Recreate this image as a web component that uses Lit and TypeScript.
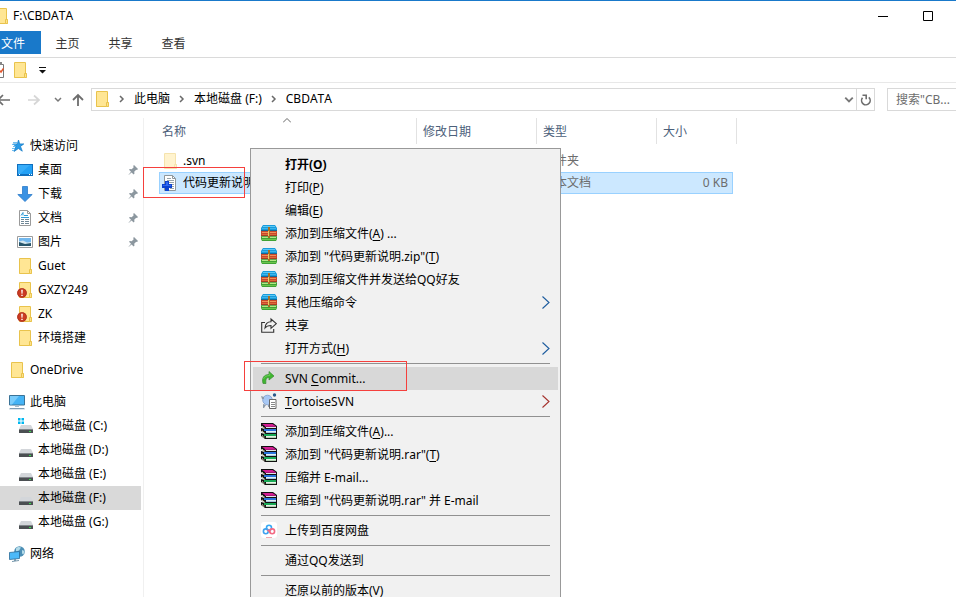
import { LitElement, html, css, svg, nothing } from "lit";
import type { TemplateResult } from "lit";
import { customElement } from "lit/decorators.js";
import { classMap } from "lit/directives/class-map.js";

const icon = (name: string, box = "0 0 16 16", w = 16, h = 16) => html`
  <svg class="icon" width=${w} height=${h} viewBox=${box} aria-hidden="true">${shapes[name]}</svg>`;

const folder = svg`
  <path d="M2 1h11v11h1v4H2z" fill="#ffe694"/>
  <path d="M2.500 .5h11v11h.9v4H2.500z" fill="none" stroke="#e9c34c"/>
  <path d="M12.500 15v-3.500h1.900v4h-1.900" fill="#ffe694" stroke="#e9c34c"/>`;

const drive = svg`
  <path d="M4 7h10l2 4H2z" fill="#d3d6da"/>
  <path d="M2 11h14v4H2z" fill="#4b4f52"/>
  <path d="M2 11h14v1H2z" fill="#80868a"/>
  <path d="M12 13h2v1h-2z" fill="#35e04b"/>`;

const shapes: Record<string, TemplateResult> = {
  folder,
  faded: svg`<g opacity=".45">${folder}</g>`,
  badFolder: svg`${folder}
    <circle cx="5" cy="11" r="4.800" fill="#cc3b22"/>
    <circle cx="5" cy="11" r="4.300" fill="none" stroke="#a8341f" stroke-width=".8"/>
    <path d="M4.200 7.800h1.600l-.3 4h-1zM4.300 12.700h1.400v1.400H4.300z" fill="#fff"/>`,
  star: svg`
    <path d="M9.500 2l1.200 3.900h4.100l-3.300 2.500 1.800 4.800-3.900-2.700-4.300 3 1.700-4.900L4.200 5.900h4.100z" fill="#2b9be6" stroke="#1178c4" stroke-width=".7"/>
    <path d="M4 4.500h4M3 6.500h4M4 8.500h3M3 10.500h3M3 12.500h2" stroke="#4aaeee" stroke-width=".8"/>`,
  desktop: svg`
    <path d="M0 2h16v12H0z" fill="#0f6fbe"/><path d="M1 3h14v9H1z" fill="#22a0f5"/>
    <path d="M1 3h12L3 12H1z" fill="#38adf9"/><path d="M2 12.500h1m9 0h1m1 0h1" stroke="#fff"/>`,
  down: svg`<path d="M5.500 .5h5v8h4.700L8 15.500.8 8.500h4.700z" fill="#3a92e3" stroke="#2b7bca" stroke-width=".8"/>`,
  doc: svg`
    <path d="M2.500 .5h8l3 3v12h-11z" fill="#fff" stroke="#9a9a9a"/><path d="M10.500 .5v3h3" fill="none" stroke="#9a9a9a"/>
    <path d="M4 5.500l2-3v3M7 5.500h4M4 7.500h8" stroke="#2f9bd8" fill="none"/>
    <path d="M4 9.500h3m1 0h4M4 11.500h3m1 0h4M4 13.500h3m1 0h4" stroke="#6f8796"/>`,
  picture: svg`
    <path d="M.5 2.500h15v11H.5z" fill="#fff" stroke="#9c9c9c"/><path d="M2 4h12v8H2z" fill="#72b8ee"/>
    <path d="M2 7.500l4-1 4 2 4-.5v4H2z" fill="#d5e6ee"/><path d="M2 8l3 1 3 1 6-1v3H2z" fill="#28566b"/>`,
  pc: svg`
    <path d="M.5 1.500h15v9.500H.5z" fill="#45b3f5" stroke="#3b7397"/><path d="M1 2h9L3 10.500H1z" fill="#7accfb"/>
    <path d="M6 11.500h4v1.500H6z" fill="#a8bccb"/><path d="M1 14h14l1 1.300H0z" fill="#7f9db5"/>`,
  drive,
  winDrive: svg`${drive}<path d="M1 0h2.500v2.500H1zM4.500 0H7v2.500H4.500zM1 3.500h2.500V6H1zM4.500 3.500H7V6H4.500z" fill="#00b7f0"/>`,
  network: svg`
    <circle cx="10.500" cy="5.500" r="5.300" fill="#4c8fb5"/>
    <path d="M7 2.500c2-2.500 4-1.500 5-1l-2 3-3 1zM13 4l2.500 1-1 3.500-1.500-1z" fill="#b3dbe9"/>
    <path d="M.5 6.500l10-1v7l-10 1z" fill="#4cb9f8" stroke="#2a6b98" stroke-width=".8"/>
    <path d="M3 15l7-1v1l-7 1z" fill="#7899ad"/><path d="M5 13h2v2H5z" fill="#7899ad"/>`,
  pin: svg`<path d="M6 0l4 4-1 1-.8-.2-2 2 .3 1.800-.9.900-2-2L0 10.500l3-3.700-2-2 .9-.9 1.800.3 2-2L5.200 1z" fill="#8c979f"/>`,
  textDoc: svg`
    <path d="M2.500 .5h8l3 3v12h-11z" fill="#fff" stroke="#8f979b"/><path d="M10.500 .5v3h3" fill="none" stroke="#8f979b"/>
    <path d="M5 3.500h4M5 5.500h7M5 7.500h7M8 9.500h4M9 11.500h3M8 13.500h4" stroke="#97a4ab"/>
    <path d="M3 6h4v3h3v4H7v3H3v-3H0V9h3z" fill="#0d43cf"/><path d="M4 7h2v3h3v1H1v-1h3z" fill="#2f69f0"/>`,
  zip: svg`
    <path d="M2 0h12l2 3v2H0V3z" fill="#189bdc"/><path d="M2 1h12v1H2z" fill="#5cc9f5"/><path d="M1 3h14v1H1z" fill="#3db5ea"/>
    <path d="M0 5h16v1H0z" fill="#146a96"/>
    <path d="M0 6h16v5H0z" fill="#c9472a"/><path d="M1 7h14v1H1z" fill="#ee9157"/><path d="M1 9h14v1H1z" fill="#dc6a3a"/>
    <path d="M0 10.500h16v.8H0z" fill="#8a3519"/>
    <path d="M0 11.300h16V14l-1 2H1l-1-2z" fill="#3fa235"/><path d="M1 12h14v1H1z" fill="#b4e684"/><path d="M1 14h14v1H1z" fill="#6cc64c"/>
    <path d="M7 2h2v11H7z" fill="#a87024"/><path d="M7 6h1v5H7z" fill="#f1cb66"/>`,
  share: svg`<path d="M4 5.500H.7v9.800h12V12M4 11c.3-4 2.500-6.200 6-6.200V2l5.300 4.700-5.300 4.600V8.500C7.500 8.500 5.500 9 4 11z" fill="none" stroke="#333" stroke-width="1.100"/>`,
  commit: svg`<path d="M2 13.500C.5 8 3 4.500 8 4.500V1.500L13 6 8 10V7.500C5 7.500 4.500 10 5 13.500z" fill="#3fb62f" stroke="#3a8a33" stroke-width=".7"/><path d="M2.500 9C3.500 6.500 5.500 5.500 8.700 5.500V3.500" fill="none" stroke="#73d465" stroke-width=".8"/>`,
  tortoise: svg`
    <circle cx="6.500" cy="7" r="4.800" fill="#a8c8f4" stroke="#7e9ccb" stroke-width=".8"/>
    <path d="M0 3l3 1v2L1 6zM2 11l3 1-2 3H2zM7 12h2v2H7z" fill="#8d9aa9"/><circle cx="13.500" cy="2" r="1.700" fill="#29598a"/>
    <path d="M8.500 6.500h6.500v9H8.500z" fill="#fff" stroke="#666"/><path d="M10 9.500h4M10 11.500h4M10 13.500h4" stroke="#888"/>`,
  rar: svg`
    <path d="M0 0h12l4 3v3H4L0 3z" fill="#111"/><path d="M1 1h10.500l3 2H4z" fill="#d31d92"/><path d="M4 3h11v1H4z" fill="#a81578"/><path d="M5 4h10v1H5z" fill="#e4e4e4"/>
    <path d="M0 5l4 1h12v5H4L0 8z" fill="#111"/><path d="M3 6h12v2H3z" fill="#2a74dc"/><path d="M5 8h10v2H5z" fill="#e3eef5"/><path d="M5 9h10v.5H5z" fill="#68a0c8"/>
    <path d="M0 10l4 1h12v5H4l-4-3z" fill="#111"/><path d="M3 11h12v2H3z" fill="#18a955"/><path d="M5 13h10v2H5z" fill="#e6efe6"/><path d="M5 14h10v.5H5z" fill="#80b580"/>
    <path d="M1 3.500l3 2M1 8l3 2.500M1 12.800l3 2" stroke="#f3f1c8" stroke-width="1.200" stroke-dasharray="1 .7"/>`,
  baidu: svg`
    <rect width="16" height="16" rx="3" fill="#fff"/>
    <g fill="none" stroke-width="1.600"><circle cx="8" cy="5.700" r="2.500" stroke="#34a8f5"/>
    <circle cx="4.800" cy="9.300" r="2.400" stroke="#3da2f0"/><circle cx="11.200" cy="9.300" r="2.400" stroke="#f36983"/>
    <path d="M6.500 7.700l3 3" stroke="#f36983"/></g><path d="M5 15h6v1H5z" fill="#f2a6ad"/>`,
  clip: svg`<path d="M0 2.500h11.500v13H0z" fill="#fff" stroke="#777"/><path d="M7 0h3v3H7z" fill="#888"/><path d="M7 8l2 2 2.500-3.500" fill="none" stroke="#e5562b" stroke-width="1.500"/>`,
  back: svg`<path d="M15 8H3M8 3L3 8l5 5" fill="none" stroke="#6d6d6d" stroke-width="1.700"/>`,
  forward: svg`<path d="M2 8h11M8 3.500L13 8l-5 4.500" fill="none" stroke="#d6d6d6" stroke-width="1.700"/>`,
  up: svg`<path d="M8 14V3M3 8l5-5 5 5" fill="none" stroke="#6d6d6d" stroke-width="1.800"/>`,
  chevDown: svg`<path d="M1 2l3 3 3-3" fill="none" stroke="#787878" stroke-width="1.500"/>`,
  chevRight: svg`<path d="M2 1l3 3-3 3" fill="none" stroke="#6a6a6a" stroke-width="1.500"/>`,
  chevUp: svg`<path d="M0 4.500l4-4 4 4" fill="none" stroke="#666"/>`,
  more: svg`<path d="M0 0h7v1H0zM0 3h7L3.500 6.500z" fill="#111"/>`,
  refresh: svg`<path d="M2.500 3.800A4.300 4.300 0 1 0 8.800 3.300M2.500 1.300H6.200V5.200" fill="none" stroke="#6d6d6d" stroke-width="1.600"/>`,
  submenu: svg`<path d="M.5 .5L7 6.500l-6.500 6" fill="none" stroke="#1d5c9e" stroke-width="1.100"/>`,
  submenuRed: svg`<path d="M.5 .5L7 6.500l-6.500 6" fill="none" stroke="#a5322d" stroke-width="1.100"/>`,
  minimize: svg`<path d="M0 5h10v1H0z" fill="#000"/>`,
  maximize: svg`<path d="M.5 .5h9v9h-9z" fill="none" stroke="#000"/>`,
};

interface NavItem { label: string; icon: string; top?: boolean; pinned?: boolean; current?: boolean }

const navGroups: NavItem[][] = [
  [
    { label: "快速访问", icon: "star", top: true },
    { label: "桌面", icon: "desktop", pinned: true },
    { label: "下载", icon: "down", pinned: true },
    { label: "文档", icon: "doc", pinned: true },
    { label: "图片", icon: "picture", pinned: true },
    { label: "Guet", icon: "folder" },
    { label: "GXZY249", icon: "badFolder" },
    { label: "ZK", icon: "badFolder" },
    { label: "环境搭建", icon: "folder" },
  ],
  [{ label: "OneDrive", icon: "folder", top: true }],
  [
    { label: "此电脑", icon: "pc", top: true },
    { label: "本地磁盘 (C:)", icon: "winDrive" },
    { label: "本地磁盘 (D:)", icon: "drive" },
    { label: "本地磁盘 (E:)", icon: "drive" },
    { label: "本地磁盘 (F:)", icon: "drive", current: true },
    { label: "本地磁盘 (G:)", icon: "drive" },
  ],
  [{ label: "网络", icon: "network", top: true }],
];

/* An underscore in a label precedes its access key. */
interface MenuItem { label: string; icon?: string; bold?: boolean; active?: boolean; sub?: string }

const menuGroups: MenuItem[][] = [
  [
    { label: "打开(_O)", bold: true },
    { label: "打印(_P)" },
    { label: "编辑(_E)" },
    { label: "添加到压缩文件(_A) ...", icon: "zip" },
    { label: '添加到 "代码更新说明.zip"(_T)', icon: "zip" },
    { label: "添加到压缩文件并发送给QQ好友", icon: "zip" },
    { label: "其他压缩命令", icon: "zip", sub: "submenu" },
    { label: "共享", icon: "share" },
    { label: "打开方式(_H)", sub: "submenu" },
  ],
  [
    { label: "SVN _Commit...", icon: "commit", active: true },
    { label: "_TortoiseSVN", icon: "tortoise", sub: "submenuRed" },
  ],
  [
    { label: "添加到压缩文件(_A)...", icon: "rar" },
    { label: '添加到 "代码更新说明.rar"(_T)', icon: "rar" },
    { label: "压缩并 E-mail...", icon: "rar" },
    { label: '压缩到 "代码更新说明.rar" 并 E-mail', icon: "rar" },
  ],
  [{ label: "上传到百度网盘", icon: "baidu" }],
  [{ label: "通过QQ发送到" }],
  [{ label: "还原以前的版本(_V)" }],
];

const base = css`
  * { box-sizing: border-box; }
  .icon { display: block; flex: none; }
  button, input {
    font: inherit; color: inherit; background: none; border: 0; padding: 0; margin: 0; text-align: left;
  }
`;

@customElement("context-menu")
class ContextMenu extends LitElement {
  static styles = [base, css`
    :host {
      display: block; width: 311px; padding: 4px 2px; background: #f1f1f1; border: 1px solid #999;
    }
    .item { display: flex; align-items: center; width: 100%; height: 23px; padding: 0 8px; white-space: nowrap; }
    .active { background: #d8d8d8; }
    .bold { font-weight: 700; }
    .slot { flex: none; width: 24px; padding-bottom: 1px; }
    .label { flex: 1; }
    .key { text-decoration: underline; text-underline-offset: 2px; }
    .line { height: 1px; margin: 3px 8px; border: 0; background: #919191; }
  `];

  private label(text: string) {
    const [before, after] = text.split("_");
    return after === undefined
      ? text
      : html`${before}<span class="key">${after[0]}</span>${after.slice(1)}`;
  }

  render() {
    return menuGroups.map((group, i) => html`
      ${i ? html`<hr class="line">` : nothing}
      ${group.map((m) => html`
        <button class=${classMap({ item: true, active: !!m.active, bold: !!m.bold })} role="menuitem">
          <span class="slot">${m.icon ? icon(m.icon) : nothing}</span>
          <span class="label">${this.label(m.label)}</span>
          ${m.sub ? icon(m.sub, "0 0 8 13", 8, 13) : nothing}
        </button>`)}`);
  }
}

@customElement("nav-pane")
class NavPane extends LitElement {
  static styles = [base, css`
    :host { display: flex; flex-direction: column; gap: 8px; padding: 16px 2px 0 0; border-right: 1px solid #f0f0f0; }
    .item { display: flex; align-items: center; gap: 5px; width: 100%; height: 24px; padding: 0 3px 0 17px; white-space: nowrap; }
    .top { padding-left: 9px; }
    .current { background: #d9d9d9; }
    .label { flex: 1; }
  `];

  render() {
    return navGroups.map((group) => html`
      <div>
        ${group.map((n) => html`
          <button class=${classMap({ item: true, top: !!n.top, current: !!n.current })}>
            ${icon(n.icon)}<span class="label">${n.label}</span>
            ${n.pinned ? icon("pin", "0 0 10 10", 10, 10) : nothing}
          </button>`)}
      </div>`);
  }
}

@customElement("app-root")
class AppRoot extends LitElement {
  static styles = [base, css`
    :host {
      display: flex; flex-direction: column; position: relative; height: 100vh; overflow: hidden;
      background: #fff; color: #000; border-top: 1px solid #1979ca; box-sizing: border-box;
      font: 12px/20px "Noto Sans", "Noto Sans CJK SC", sans-serif; font-kerning: none;
    }
    .title { display: flex; align-items: center; gap: 5px; height: 30px; flex: none; padding-right: 23px; }
    .name { flex: 1; }
    .win { flex: none; margin-left: 30px; }
    .tabs { display: flex; height: 27px; flex: none; border-bottom: 1px solid #dadada; color: #333; }
    .tab { height: 23px; width: 53px; padding-top: 2px; text-align: center; }
    .file { width: 41px; padding-right: 15px; background: #1979ca; color: #fff; }
    .quick { display: flex; align-items: center; gap: 8px; height: 25px; flex: none; border-bottom: 1px solid #e8e8e8; }
    .nav { display: flex; align-items: center; height: 33px; flex: none; }
    .arrows { display: flex; align-items: center; width: 91px; }
    .forward { margin-left: 15px; }
    .recent { margin: 0 8px 0 12px; }
    .address { display: flex; align-items: center; flex: 1; height: 23px; border: 1px solid #d9d9d9; }
    .crumbs { display: flex; align-items: center; flex: 1; gap: 8px; padding: 0 0 2px 2px; }
    .drop { padding: 0 2px; }
    .reload { display: flex; align-items: center; height: 21px; padding: 0 2px 0 3px; border-left: 1px solid #d9d9d9; }
    .search {
      width: 69px; height: 23px; margin-left: 12px; padding-left: 8px; border: 1px solid #d9d9d9; border-right: 0;
    }
    .search::placeholder { color: #6d6d6d; opacity: 1; }
    .body { display: flex; flex: 1; min-height: 0; padding-top: 2px; }
    .side { width: 144px; flex: none; }
    .files { flex: 1; min-width: 0; padding-left: 15px; }
    .table { width: 578px; table-layout: fixed; border-collapse: separate; border-spacing: 0; }
    .table tbody::before { content: ""; display: block; height: 6px; }
    th { height: 26px; padding: 2px 0 0 6px; font-weight: 400; text-align: left; color: #4c607a; border-right: 1px solid #e2e2e2; }
    .c-name { width: 258px; position: relative; padding-left: 3px; }
    .c-mid { width: 120px; }
    .c-size { width: 76px; border-right: 0; }
    .c-end { width: 4px; padding: 0; }
    .sort { position: absolute; left: 50%; top: 0; margin-left: -5px; }
    td { height: 22px; padding: 0 0 0 6px; color: #6d6d6d; white-space: nowrap; line-height: 20px; border: 1px solid transparent; border-width: 1px 0; }
    .cell { display: flex; align-items: center; gap: 5px; color: #000; }
    td:first-child { padding-left: 2px; border-left-width: 1px; }
    td:nth-child(4) { text-align: right; padding-right: 4px; border-right-width: 1px; }
    .selected td { background: #cce8ff; border-color: #99d1ff; }
    .selected td:last-child { background: none; border-color: transparent; }
    .menu { position: absolute; left: 250px; top: 147px; }
    .mark { position: absolute; border: 1px solid #f5403d; pointer-events: none; }
    .mark-file { left: 143px; top: 166px; width: 102px; height: 31px; }
    .mark-commit { left: 244px; top: 360px; width: 163px; height: 30px; }
  `];

  render() {
    const chevron = icon("chevRight", "0 0 8 8", 8, 8);
    return html`
      <header class="title">
        ${icon("folder", "7 0 8 16", 8, 16)}
        <span class="name">F:\\CBDATA</span>
        <button class="win" aria-label="最小化">${icon("minimize", "0 0 10 10", 10, 10)}</button>
        <button class="win" aria-label="最大化">${icon("maximize", "0 0 10 10", 10, 10)}</button>
      </header>
      <nav class="tabs">
        <button class="tab file">文件</button>
        <button class="tab">主页</button>
        <button class="tab">共享</button>
        <button class="tab">查看</button>
      </nav>
      <div class="quick">
        <button aria-label="属性">${icon("clip", "8 0 4 16", 4, 16)}</button>
        <button aria-label="新建文件夹">${icon("folder")}</button>
        <button aria-label="自定义快速访问工具栏">${icon("more", "-3 0 10 7", 10, 7)}</button>
      </div>
      <div class="nav">
        <div class="arrows">
          <button aria-label="后退">${icon("back", "5 0 11 16", 11, 16)}</button>
          <button class="forward" aria-label="前进">${icon("forward")}</button>
          <button class="recent" aria-label="最近位置">${icon("chevDown", "0 0 8 8", 8, 8)}</button>
          <button aria-label="上移">${icon("up")}</button>
        </div>
        <div class="address">
          <div class="crumbs">
            ${icon("folder")}${chevron}
            <button>此电脑</button>${chevron}
            <button>本地磁盘 (F:)</button>${chevron}
            <button>CBDATA</button>
          </div>
          <button class="drop" aria-label="展开">${icon("chevDown", "0 0 8 7", 10, 9)}</button>
          <button class="reload" aria-label="刷新">${icon("refresh", "0 0 12 12", 12, 12)}</button>
        </div>
        <input class="search" type="text" aria-label="搜索" placeholder='搜索"CB...'>
      </div>
      <main class="body">
        <nav-pane class="side"></nav-pane>
        <section class="files">
          <table class="table">
            <thead>
              <tr>
                <th class="c-name">名称<span class="sort">${icon("chevUp", "0 0 8 5", 8, 5)}</span></th>
                <th class="c-mid">修改日期</th>
                <th class="c-mid">类型</th>
                <th class="c-size">大小</th>
                <th class="c-end"></th>
              </tr>
            </thead>
            <tbody>
              <tr>
                <td><span class="cell">${icon("faded")}.svn</span></td>
                <td></td><td>文件夹</td><td></td><td></td>
              </tr>
              <tr class="selected">
                <td><span class="cell">${icon("textDoc")}代码更新说明.txt</span></td>
                <td></td><td>文本文档</td><td>0 KB</td><td></td>
              </tr>
            </tbody>
          </table>
        </section>
      </main>
      <context-menu class="menu" role="menu"></context-menu>
      <div class="mark mark-file"></div>
      <div class="mark mark-commit"></div>
    `;
  }
}
